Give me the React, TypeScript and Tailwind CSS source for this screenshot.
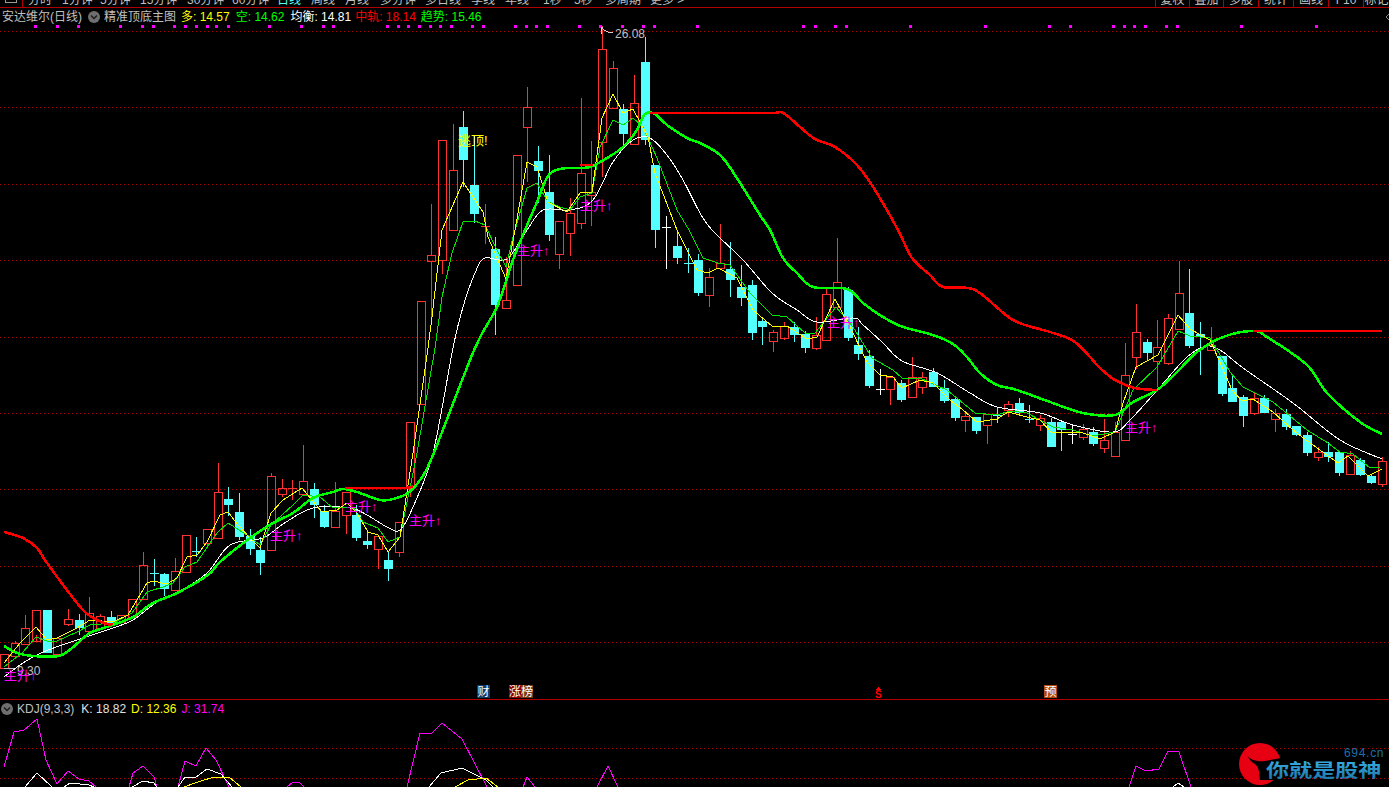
type Candle = [kind: string, hi: number, top: number, bot: number, lo: number];

const RED = '#ff3232';
const CYAN = '#54ffff';

// r = hollow red, c = filled cyan, rx/cx/wx = cross in that colour
const candles: Candle[] = [
  ['r', 654, 654, 668, 668], ['r', 641, 643, 656, 656], ['r', 615, 628, 644, 644], ['r', 610, 610, 641, 635], ['c', 610, 610, 653, 653],
  ['r', 637, 638, 654, 654], ['r', 609, 619, 624, 626], ['c', 614, 620, 628, 635], ['r', 597, 613, 631, 631], ['r', 614, 616, 628, 628],
  ['c', 611, 617, 624, 625], ['r', 615, 615, 622, 622], ['r', 599, 599, 617, 617], ['r', 552, 565, 599, 599], ['cx', 559, 573, 573, 586],
  ['c', 573, 574, 589, 596], ['r', 558, 571, 590, 590], ['r', 535, 535, 572, 572], ['cx', 537, 551, 551, 557], ['r', 529, 529, 543, 547],
  ['r', 463, 492, 538, 538], ['c', 487, 499, 505, 516], ['c', 493, 512, 537, 540], ['c', 529, 536, 549, 555], ['c', 537, 550, 563, 575],
  ['r', 473, 476, 550, 551], ['r', 479, 488, 494, 497], ['rx', 480, 488, 488, 500], ['r', 445, 481, 494, 495], ['c', 483, 489, 505, 518],
  ['c', 505, 511, 527, 528], ['r', 482, 511, 527, 527], ['r', 492, 492, 515, 534], ['c', 505, 515, 538, 541], ['c', 532, 541, 545, 549],
  ['r', 536, 536, 549, 569], ['c', 552, 560, 569, 581], ['r', 522, 522, 552, 557], ['r', 422, 422, 488, 497], ['r', 301, 301, 404, 404],
  ['r', 204, 255, 261, 320], ['r', 140, 140, 260, 274], ['r', 124, 170, 230, 230], ['c', 111, 127, 160, 187], ['c', 136, 185, 214, 223],
  ['rx', 204, 226, 226, 244], ['c', 237, 249, 305, 335], ['r', 257, 300, 308, 308], ['r', 155, 155, 285, 285], ['r', 87, 107, 127, 182],
  ['c', 146, 161, 171, 203], ['c', 155, 192, 235, 241], ['r', 221, 221, 254, 269], ['r', 198, 213, 233, 256], ['r', 98, 173, 223, 229],
  ['r', 141, 192, 195, 226], ['r', 26, 49, 142, 177], ['r', 61, 68, 108, 108], ['c', 104, 109, 134, 145], ['r', 75, 103, 144, 144],
  ['c', 37, 62, 140, 145], ['c', 165, 165, 230, 248], ['wx', 216, 227, 227, 269], ['c', 230, 246, 258, 264], ['cx', 248, 263, 263, 273],
  ['c', 254, 260, 293, 296], ['r', 268, 277, 295, 307], ['r', 224, 263, 268, 268], ['c', 242, 269, 280, 297], ['c', 265, 287, 298, 306],
  ['c', 280, 285, 333, 340], ['c', 317, 321, 327, 345], ['r', 330, 332, 341, 352], ['r', 322, 326, 338, 340], ['c', 322, 327, 335, 342],
  ['c', 331, 334, 348, 353], ['r', 317, 335, 348, 350], ['r', 289, 294, 340, 340], ['r', 238, 282, 307, 307], ['c', 287, 290, 338, 341],
  ['c', 327, 345, 354, 360], ['c', 350, 356, 386, 388], ['wx', 369, 389, 389, 395], ['r', 377, 377, 389, 405], ['c', 380, 383, 400, 402],
  ['r', 357, 377, 397, 397], ['r', 372, 377, 387, 394], ['c', 368, 372, 387, 387], ['c', 380, 388, 401, 403], ['c', 398, 399, 418, 421],
  ['r', 413, 416, 420, 432], ['c', 417, 417, 431, 434], ['r', 414, 414, 425, 444], ['cx', 408, 415, 415, 423], ['r', 401, 404, 410, 417],
  ['c', 398, 403, 413, 416], ['cx', 405, 419, 419, 423], ['r', 415, 418, 425, 431], ['c', 418, 422, 447, 447], ['c', 422, 422, 430, 451],
  ['wx', 425, 434, 434, 444], ['r', 424, 429, 437, 440], ['c', 427, 432, 444, 446], ['r', 419, 440, 448, 453], ['r', 422, 432, 456, 457],
  ['r', 343, 375, 440, 440], ['r', 304, 332, 357, 369], ['c', 339, 342, 353, 361], ['r', 320, 347, 361, 387], ['r', 314, 318, 363, 365],
  ['r', 261, 293, 329, 329], ['c', 269, 313, 346, 348], ['c', 322, 334, 337, 375], ['r', 327, 345, 350, 350], ['c', 356, 356, 394, 396],
  ['c', 376, 388, 402, 402], ['c', 395, 397, 416, 427], ['r', 392, 398, 413, 415], ['c', 395, 398, 413, 413], ['r', 409, 413, 419, 432],
  ['c', 409, 414, 427, 430], ['c', 426, 426, 435, 436], ['c', 432, 435, 453, 456], ['r', 447, 452, 457, 461], ['c', 442, 452, 457, 462],
  ['c', 451, 452, 473, 476], ['r', 451, 455, 474, 475], ['c', 458, 460, 475, 476], ['c', 474, 476, 483, 484], ['r', 457, 461, 484, 487],
];

const thickGreen =
  '4,646 17,653 33,656 59,656 72,648 90,633 110,626 133,617 153,603 177,593 208,575 220,562 250,538 273,523 293,513 313,498 333,492 343,489 357,492 380,500 393,499 408,493 420,480 433,455 475,348 497,307 513,260 525,230 537,202 548,176 560,169 573,168 590,167 607,158 623,147 637,130 645,114 655,114 667,125 687,138 700,143 720,155 735,175 760,215 770,230 783,258 797,273 813,287 847,289 863,303 883,317 903,327 933,335 953,344 967,357 980,373 997,385 1017,390 1050,402 1083,413 1115,415 1133,402 1157,390 1177,372 1197,352 1223,337 1253,331 1267,337 1307,365 1327,393 1360,422 1382,434';

const redSegments = [
  '4,532 23,538 37,548 47,563 77,603 90,616 107,624 113,624',
  '345,488 390,488 406,488 413,486',
  '580,165 593,165',
  '650,113 700,113 770,113 783,113 800,127 815,139 835,147 857,165 875,190 898,230 912,258 930,275 943,287 975,290 1013,320 1050,332 1075,342 1100,368 1115,380 1135,388 1157,390',
  '1253,331 1382,331',
];

const whiteLine =
  '4,677 23,663 43,652 83,638 113,628 133,620 157,602 177,593 207,573 230,545 263,538 283,524 313,508 350,508 367,515 387,527 400,530 413,507 433,453 453,348 463,307 475,273 485,258 507,259 527,230 543,210 570,210 593,200 613,162 633,140 650,138 667,155 683,180 700,213 712,230 743,260 772,293 797,310 817,322 853,318 863,325 883,343 902,361 937,373 970,393 997,407 1040,413 1073,425 1113,432 1130,420 1160,387 1187,357 1207,346 1223,352 1243,368 1293,403 1340,440 1382,459';

const yellowLine =
  '4,663 20,643 36,627 47,640 57,638 77,628 90,620 113,622 128,615 147,583 153,581 167,584 177,578 187,557 197,555 207,542 220,515 228,512 238,525 250,538 260,548 271,513 283,500 302,488 322,512 337,510 347,503 357,513 368,532 378,535 388,552 400,537 413,453 428,348 432,317 442,230 463,182 483,212 488,237 506,279 515,230 527,162 537,167 548,202 567,212 580,193 592,192 602,118 613,94 623,113 633,109 648,137 655,173 677,230 697,270 708,273 718,268 737,278 753,310 772,326 787,326 807,339 817,337 835,299 850,327 867,362 880,375 893,377 902,388 920,380 933,383 950,400 963,410 977,422 997,419 1008,412 1027,417 1040,420 1052,433 1070,432 1083,433 1100,439 1115,432 1123,403 1136,367 1158,355 1178,315 1190,329 1210,340 1222,367 1232,390 1242,401 1253,399 1273,412 1293,430 1313,445 1338,463 1348,456 1368,476 1382,469';

const greenLine =
  '4,667 23,652 36,637 47,641 57,641 77,632 90,625 113,623 132,613 147,592 163,587 173,583 185,567 197,562 217,533 228,523 250,537 260,545 271,525 293,505 303,495 320,497 333,508 353,507 363,522 378,528 388,542 400,537 417,453 435,348 442,297 452,253 463,222 475,221 485,225 497,250 506,267 513,237 527,188 537,183 548,202 560,207 570,210 580,197 592,193 600,147 613,120 623,125 633,118 643,127 657,158 677,210 689,230 703,258 718,263 730,265 750,293 772,315 787,317 805,333 815,333 836,307 853,327 872,358 893,370 902,378 920,378 947,390 975,413 997,415 1010,411 1027,413 1040,420 1053,427 1073,430 1093,436 1115,432 1133,390 1157,367 1178,331 1190,336 1210,338 1230,372 1243,387 1273,402 1307,430 1328,443 1340,452 1353,454 1370,468 1380,467';

const jSegments = [
  '4,767 14,732 24,730 37,719 46,760 57,784 68,771 79,779 89,781 96,787',
  '129,787 133,773 143,766 154,777 157,787',
  '178,787 185,761 196,766 206,748 216,760 229,787',
  '287,787 293,782 299,782 304,787',
  '407,787 420,733 431,734 442,723 462,739 487,787',
  '523,787 527,777 535,787',
  '597,787 608,766 618,787',
  '1129,787 1136,766 1146,771 1159,769 1168,751 1179,752 1191,787',
];
const kSegments = [
  '25,787 37,773 52,787',
  '64,787 70,783 89,785 94,787',
  '132,787 143,781 154,783 157,787',
  '178,787 185,777 196,777 207,769 221,774 232,787',
  '429,787 441,773 462,768 486,780 493,787',
  '1173,787 1178,783 1184,787',
];
const dSegments = ['184,787 198,782 214,777 229,777 241,787', '455,787 468,780 486,778 498,787'];

const dots = [
  35, 57, 78, 120, 142, 153, 174, 185, 196, 207, 216, 228, 269, 301, 323, 333, 387, 398, 408, 419, 430, 440, 451, 472, 483,
  515, 526, 536, 547, 579, 600, 622, 643, 654, 697, 803, 815, 835, 846, 910, 985, 1049, 1070, 1113, 1124, 1134, 1145, 1166, 1177, 1241, 1316,
];

const gridY = [31, 107, 184, 260, 337, 413, 489, 566, 642];

const signals = [
  [4, 680], [270, 540], [345, 511], [409, 525], [517, 255], [580, 210], [827, 327], [1125, 432],
];

const periods = [
  { label: '分时', cls: 'w-[34px]' },
  { label: '1分钟', cls: 'w-[38px]' },
  { label: '5分钟', cls: 'w-[40px]' },
  { label: '15分钟', cls: 'w-[47px]' },
  { label: '30分钟', cls: 'w-[45px]' },
  { label: '60分钟', cls: 'w-[45px]' },
  { label: '日线', cls: 'w-[34px] text-[#54ffff]' },
  { label: '周线', cls: 'w-[34px]' },
  { label: '月线', cls: 'w-[35px]' },
  { label: '多分钟', cls: 'w-[45px]' },
  { label: '多日线', cls: 'w-[46px]' },
  { label: '季线', cls: 'w-[34px]' },
  { label: '年线', cls: 'w-[38px]' },
  { label: '1秒', cls: 'w-[31px]' },
  { label: '5秒', cls: 'w-[31px]' },
  { label: '多周期', cls: 'w-[45px]' },
  { label: '更多 >', cls: 'w-[40px]' },
];

const tools = [
  { label: '复权', cls: 'w-[34px]' },
  { label: '叠加', cls: 'w-[34px]' },
  { label: '多股', cls: 'w-[35px]' },
  { label: '统计', cls: 'w-[35px]' },
  { label: '画线', cls: 'w-[35px]' },
  { label: 'F10', cls: 'w-[35px]' },
  { label: '标记', cls: 'w-[26px]' },
];

function snap(n: number) {
  return Math.round(n) + 0.5;
}

// catmull-rom through the read-off points, the long averages are smooth curves
function smooth(points: string) {
  const p = points.split(' ').map((s) => s.split(',').map(Number));
  let d = `M${p[0][0]} ${p[0][1]}`;
  for (let i = 0; i < p.length - 1; i++) {
    const p0 = p[i - 1] ?? p[i];
    const p1 = p[i];
    const p2 = p[i + 1];
    const p3 = p[i + 2] ?? p2;
    const c1x = p1[0] + (p2[0] - p0[0]) / 6;
    const c1y = p1[1] + (p2[1] - p0[1]) / 6;
    const c2x = p2[0] - (p3[0] - p1[0]) / 6;
    const c2y = p2[1] - (p3[1] - p1[1]) / 6;
    d += ` C${c1x} ${c1y} ${c2x} ${c2y} ${p2[0]} ${p2[1]}`;
  }
  return d;
}

function CandleMark({ candle, index }: { candle: Candle; index: number }) {
  const [kind, hi, top, bot, lo] = candle;
  const x = Math.round(4 + 10.68 * index);
  const cx = x + 0.5;
  const color = kind[0] === 'r' ? RED : kind[0] === 'c' ? CYAN : '#ffffff';

  if (kind.length === 2) {
    return (
      <g stroke={color} strokeWidth={1}>
        <line x1={cx} x2={cx} y1={hi} y2={lo} />
        <line x1={x - 4} x2={x + 5} y1={snap(top)} y2={snap(top)} />
      </g>
    );
  }
  if (kind === 'c') {
    return (
      <g>
        <line x1={cx} x2={cx} y1={hi} y2={lo} stroke={color} />
        <rect x={x - 4} y={top} width={9} height={bot - top} fill={color} />
      </g>
    );
  }
  return (
    <g stroke={color} strokeWidth={1}>
      <line x1={cx} x2={cx} y1={hi} y2={top} />
      <line x1={cx} x2={cx} y1={bot} y2={lo} />
      <rect x={x - 4 + 0.5} y={snap(top)} width={8} height={bot - top} fill="none" />
    </g>
  );
}

function ChevronBadge() {
  return (
    <svg width="12" height="12" viewBox="0 0 12 12" className="shrink-0">
      <circle cx="6" cy="6" r="6" fill="#6f6f6f" />
      <path d="M3 4.5 L6 7.5 L9 4.5" fill="none" stroke="#1c1c1c" strokeWidth="1.5" />
    </svg>
  );
}

function Legend() {
  return (
    <div className="absolute top-0 left-0 flex h-[18px] items-center whitespace-nowrap pl-[2px] text-[12px] text-[#c0c0c0]">
      <span>安达维尔(日线)</span>
      <span className="ml-[6px]"><ChevronBadge /></span>
      <span className="ml-[4px]">精准顶底主图</span>
      <span className="ml-[5px] text-[#ffff00]">多: 14.57</span>
      <span className="ml-[6px] text-[#00ff00]">空: 14.62</span>
      <span className="ml-[6px] text-white">均衡: 14.81</span>
      <span className="ml-[4px] text-[#ff0000]">中轨: 18.14</span>
      <span className="ml-[5px] text-[#00ff00]">趋势: 15.46</span>
    </div>
  );
}

function MainChart() {
  return (
    <div className="relative h-[691px] shrink-0">
      <svg viewBox="0 8 1389 691" className="absolute inset-0 h-full w-full" shapeRendering="crispEdges">
        {gridY.map((y) => (
          <line key={y} x1={0} x2={1389} y1={y + 0.5} y2={y + 0.5} stroke="#b00000" strokeDasharray="1 3" />
        ))}
        {dots.map((x) => (
          <rect key={x} x={x - 1} y={25} width={3} height={3} fill="#ff00ff" />
        ))}
        {candles.map((candle, i) => (
          <CandleMark key={i} candle={candle} index={i} />
        ))}
        <path d={smooth(whiteLine)} fill="none" stroke="#ffffff" />
        <polyline points={greenLine} fill="none" stroke="#00e600" />
        <polyline points={yellowLine} fill="none" stroke="#ffff00" />
        <path d={smooth(thickGreen)} fill="none" stroke="#00ff00" strokeWidth={2.5} />
        {redSegments.map((points) => (
          <path key={points} d={smooth(points)} fill="none" stroke="#ff0000" strokeWidth={2.5} />
        ))}

        <path d="M601.5 27 V34 M601.5 27 L605 31 M605 30 Q608 33 613 33" fill="none" stroke="#d0d0d0" />
        <text x={615} y={38} fontSize={12} fill="#c0c0c0">26.08</text>
        <path d="M4 668 H14" stroke="#c0c0c0" />
        <text x={17} y={675} fontSize={12} fill="#c0c0c0">9.30</text>
        <text x={458} y={145} fontSize={13} fill="#ffff00">逃顶!</text>
        {signals.map(([x, y]) => (
          <text key={x} x={x} y={y} fontSize={13} fill="#ff00ff">主升↑</text>
        ))}

        <path d="M1389 14 L1386 17 L1389 20" fill="none" stroke="#8a8a8a" />

        <rect x={477} y={685} width={13} height={13} fill="#123a66" />
        <text x={477.5} y={696} fontSize={12} fill="#ffffff">财</text>
        <rect x={509} y={685} width={12} height={13} fill="#8a0000" />
        <rect x={521} y={685} width={12} height={13} fill="#7a3a10" />
        <text x={509} y={696} fontSize={12} fill="#ffffff">涨榜</text>
        <polygon points="878,687 881,690 875,690" fill="#ff0000" />
        <text x={875} y={698} fontSize={10} fontWeight={700} fill="#ff0000">S</text>
        <rect x={1044} y={685} width={13} height={13} fill="#b04a10" />
        <text x={1044.5} y={696} fontSize={12} fill="#ffffff">预</text>
      </svg>
      <Legend />
    </div>
  );
}

function KdjChart() {
  return (
    <div className="relative min-h-0 flex-1">
      <svg viewBox="0 700 1389 87" className="absolute inset-0 h-full w-full">
        <g shapeRendering="crispEdges">
          <line x1={0} x2={1389} y1={748.5} y2={748.5} stroke="#b00000" strokeDasharray="1 3" />
          <line x1={0} x2={1389} y1={778.5} y2={778.5} stroke="#b00000" strokeDasharray="1 3" />
          {jSegments.map((points) => (
            <polyline key={points} points={points} fill="none" stroke="#ff00ff" />
          ))}
          {kSegments.map((points) => (
            <polyline key={points} points={points} fill="none" stroke="#ffffff" />
          ))}
          {dSegments.map((points) => (
            <polyline key={points} points={points} fill="none" stroke="#ffff00" />
          ))}
        </g>
        <defs>
          <linearGradient id="logoText" x1="0" y1="0" x2="0" y2="1">
            <stop offset="0" stopColor="#38aee3" />
            <stop offset="1" stopColor="#1b74a8" />
          </linearGradient>
        </defs>
        <circle cx={1260} cy={764} r={21} fill="#e60012" />
        <path
          d="M1247 755 C1250 760 1257 762 1265 761 L1281 758 L1284 780 L1267 780 L1260 780 C1259 775 1260 768 1255 764 C1251 762 1249 759 1247 755 Z"
          fill="#000000"
        />
        <text transform="translate(1266 777) scale(1.05 0.85)" fontSize={22} fontWeight={700} fill="url(#logoText)">
          你就是股神
        </text>
        <text x={1344} y={757} fontSize={12} letterSpacing={0.7} fill="#1d6fa8">694.cn</text>
      </svg>
      <div className="absolute top-0 left-0 flex h-[17px] items-center whitespace-nowrap pl-px text-[12px] text-[#c0c0c0]">
        <ChevronBadge />
        <span className="ml-[4px]">KDJ(9,3,3)</span>
        <span className="ml-[7px] text-[#e0e0e0]">K: 18.82</span>
        <span className="ml-[5px] text-[#ffff00]">D: 12.36</span>
        <span className="ml-[5px] text-[#ff00ff]">J: 31.74</span>
      </div>
    </div>
  );
}

export default function App() {
  return (
    <div className="flex h-screen w-full flex-col overflow-hidden bg-black font-['Liberation_Sans','Noto_Sans_CJK_SC',sans-serif]">
      <div className="flex h-[8px] shrink-0 items-end overflow-hidden border-b border-[#b00000] text-[12px] leading-[13px] text-[#c0c0c0] whitespace-nowrap">
        <div className="h-[3px] w-[12px] self-start ml-[5px] border-b border-x border-[#9a9a9a]" />
        <div className="ml-[5px] h-full w-px bg-[#b00000]" />
        <div className="flex items-end pl-[5px]">
          {periods.map((p) => (
            <span key={p.label} className={`shrink-0 ${p.cls}`}>{p.label}</span>
          ))}
        </div>
        <div className="ml-auto flex h-full items-end">
          {tools.map((tool) => (
            <span key={tool.label} className={`flex h-full items-end justify-center border-l border-[#b00000] ${tool.cls}`}>
              {tool.label}
            </span>
          ))}
        </div>
      </div>
      <MainChart />
      <div className="h-px shrink-0 bg-[#b00000]" />
      <KdjChart />
    </div>
  );
}
